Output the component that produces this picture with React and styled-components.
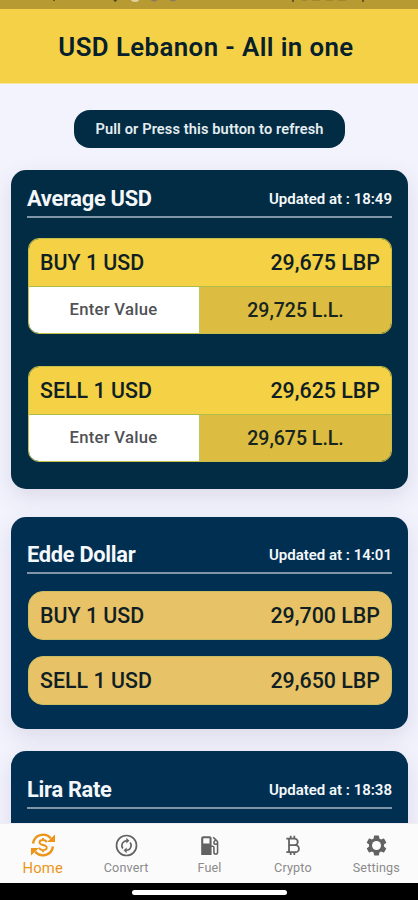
import React from "react";
import styled, { createGlobalStyle } from "styled-components";
import { MdLocalGasStation, MdSettings } from "react-icons/md";

const GlobalStyle = createGlobalStyle`
  * { box-sizing: border-box; }
  body { margin: 0; font-family: Roboto, "Liberation Sans", sans-serif; background: #f3f3fe; }
`;

const Screen = styled.div`
  width: 418px;
  height: 900px;
  overflow: hidden;
  display: flex;
  flex-direction: column;
  background: #f3f3fe;
`;

const StatusBar = styled.div`
  flex: none;
  height: 9px;
  background: #b89a33;
  overflow: hidden;

  svg { display: block; }
`;

const Header = styled.header`
  flex: none;
  height: 75px;
  display: flex;
  align-items: center;
  justify-content: center;
  padding: 2px 6px 0 0;
  background: #f4d147;
  border-bottom: 1px solid #f8e6a0;
`;

const Title = styled.h1`
  margin: 0;
  font-size: 25.8px;
  font-weight: 600;
  line-height: 30px;
  letter-spacing: 0.42px;
  color: #07202b;
`;

const Content = styled.main`
  flex: 1;
  min-height: 0;
  overflow: hidden;
  display: flex;
  flex-direction: column;
  padding: 26px 10px 0 11px;
`;

const RefreshButton = styled.button`
  flex: none;
  align-self: center;
  width: 271px;
  height: 38px;
  margin-bottom: 21.5px;
  padding: 0;
  border: 0;
  border-radius: 16px;
  background: #022c43;
  color: #e4edf1;
  font: 600 14.6px/18px Roboto, sans-serif;
  letter-spacing: 0.11px;
  white-space: nowrap;
`;

const Card = styled.section`
  flex: none;
  height: ${(p) => p.$height}px;
  margin-bottom: ${(p) => p.$gap || 0}px;
  padding: ${(p) => p.$top}px 16px 0;
  border-radius: 15px;
  background: ${(p) => p.$color};
  box-shadow: 0 8px 22px rgba(60, 55, 80, 0.13);
`;

const CardHead = styled.div`
  height: 36px;
  display: flex;
  align-items: center;
  justify-content: space-between;
  margin-bottom: ${(p) => p.$gap}px;
  border-bottom: 2px solid #7f95a8;
  color: #f4f8fa;
  white-space: nowrap;
`;

const CardTitle = styled.h2`
  margin: 0;
  font-size: 21.8px;
  font-weight: 700;
  line-height: 26px;
  letter-spacing: -0.27px;
`;

const Updated = styled.span`
  font-size: 15px;
  font-weight: 600;
  line-height: 18px;
  padding-bottom: 1px;
`;

const Converter = styled.div`
  height: 96px;
  margin: 0 0 32px 1px;
  overflow: hidden;
  border: 1px solid #c3bf4a;
  border-radius: 11px;
`;

const RateRow = styled.div`
  height: 47px;
  display: flex;
  align-items: center;
  justify-content: space-between;
  padding: 0 11px;
  background: #f4d145;
  color: #101f23;
  font-size: 21.4px;
  font-weight: 500;
  white-space: nowrap;
`;

const RatePill = styled(RateRow)`
  height: 49px;
  margin: 0 0 16px 1px;
  border: 1px solid #cdbd62;
  border-radius: 15px;
  background: #e8c267;
`;

const ValueRow = styled.div`
  height: 47px;
  display: grid;
  grid-template-columns: 171px 1fr;
  border-top: 1px solid #aebc48;
`;

const Cell = styled.div`
  display: flex;
  align-items: center;
  justify-content: center;
  white-space: nowrap;
`;

const EnterCell = styled(Cell)`
  padding: 0 1px 1px 0;
  background: #fff;
  border-right: 1px solid #b4cc68;
  color: #505254;
  font-size: 16.7px;
  font-weight: 500;
  letter-spacing: 0.25px;
`;

const ResultCell = styled(Cell)`
  background: #dcbd41;
  color: #17251f;
  font-size: 19.5px;
  font-weight: 500;
`;

const TabBar = styled.nav`
  flex: none;
  height: 60px;
  display: grid;
  grid-template-columns: repeat(5, 1fr);
  padding-left: 1px;
  background: #fbfbfc;
  border-top: 1px solid #eeeef2;
`;

const Tab = styled.div`
  display: flex;
  flex-direction: column;
  align-items: center;
  padding-top: ${(p) => (p.$active ? 8 : 9)}px;
  color: ${(p) => (p.$active ? "#eb9519" : "#626262")};

  svg { flex: none; }
`;

const TabLabel = styled.span`
  margin-top: 1px;
  font-size: ${(p) => (p.$active ? 14.8 : 12.6)}px;
  line-height: 18px;
  letter-spacing: ${(p) => (p.$active ? 0.2 : 0.15)}px;
  color: ${(p) => (p.$active ? "#eb9519" : "#8b8b8b")};
`;

const SystemBar = styled.div`
  flex: none;
  height: 17px;
  display: flex;
  justify-content: center;
  padding-top: 7px;
  background: #000;
`;

const Indicator = styled.div`
  width: 155px;
  height: 5px;
  border-radius: 2.5px;
  background: #fff;
`;

function StatusGlyphs() {
  return (
    <svg width="418" height="9" viewBox="0 0 418 9" aria-hidden="true">
      <path d="M54 0v1M114 0q2 2 2 0M293 0v2M363 0v2" stroke="#4f4118" strokeWidth="1.5" fill="none" />
      <path d="M302 0h5M312 0h8M326 0h7M338 0h8" stroke="#8c7529" strokeWidth="1" fill="none" />
      <circle cx="135" cy="-3.5" r="5.5" fill="#dfd19b" />
      <circle cx="154" cy="-3.5" r="5" fill="#8d7768" />
      <circle cx="173" cy="-3.5" r="5" fill="#8d7768" />
    </svg>
  );
}

function ExchangeIcon({ size }) {
  return (
    <svg width={size} height={size} viewBox="0 0 26 26" fill="none" stroke="currentColor">
      <path d="M3 11.5A10.2 10.2 0 0 1 20.8 6.2M23 14.5A10.2 10.2 0 0 1 5.2 19.8" strokeWidth="2.4" />
      <path d="M25 2.5v7.5h-8zM1 23.5V16h8z" fill="currentColor" stroke="none" />
      <path d="M16.6 10.2c-.4-1.5-1.8-2.2-3.6-2.2-2 0-3.5.9-3.5 2.4 0 3.5 7.3 1.7 7.3 5.2 0 1.6-1.6 2.5-3.7 2.5-2 0-3.5-.9-3.9-2.5M13 6v2M13 18v2.2" strokeWidth="1.8" />
    </svg>
  );
}

function ConvertIcon({ size }) {
  return (
    <svg width={size} height={size} viewBox="0 0 25 25" fill="none" stroke="currentColor">
      <circle cx="12.5" cy="12.5" r="10" strokeWidth="1.7" />
      <path d="M8.9 15.6A4.9 4.9 0 0 1 12.6 7.7M16.1 9.4a4.9 4.9 0 0 1-3.7 7.9" strokeWidth="1.6" />
      <path d="M12.3 4.8v5.8l3.1-2.9zM12.7 20.2v-5.8l-3.1 2.9z" fill="currentColor" stroke="none" />
    </svg>
  );
}

function BitcoinIcon({ size }) {
  return (
    <svg width={size} height={size} viewBox="0 0 25 25" fill="none" stroke="currentColor" strokeWidth="1.8">
      <path d="M6.3 5.7h8.2a3.1 3.1 0 0 1 0 6.5H9M14.5 12.2h1a3.4 3.4 0 0 1 0 6.9H6.3M9 5.7v13.4M10.7 2.8v3M14.3 2.8v3M10.7 19v3M14.3 19v3" />
    </svg>
  );
}

function GearIcon({ size }) {
  return (
    <svg width={size} height={size} viewBox="0 0 24 24">
      <MdSettings size={24} />
      <circle cx="12" cy="12" r="4.3" fill="#fbfbfc" />
    </svg>
  );
}

function RateConverter({ label, rate, result }) {
  return (
    <Converter>
      <RateRow><span>{label}</span><span>{rate}</span></RateRow>
      <ValueRow>
        <EnterCell>Enter Value</EnterCell>
        <ResultCell>{result}</ResultCell>
      </ValueRow>
    </Converter>
  );
}

function CardHeading({ title, time, gap }) {
  return (
    <CardHead $gap={gap}>
      <CardTitle>{title}</CardTitle>
      <Updated>Updated at : {time}</Updated>
    </CardHead>
  );
}

const tabs = [
  { label: "Home", Icon: ExchangeIcon, size: 26, active: true },
  { label: "Convert", Icon: ConvertIcon, size: 25 },
  { label: "Fuel", Icon: MdLocalGasStation, size: 25 },
  { label: "Crypto", Icon: BitcoinIcon, size: 25 },
  { label: "Settings", Icon: GearIcon, size: 25 },
];

export default function App() {
  return (
    <>
      <GlobalStyle />
      <Screen>
        <StatusBar><StatusGlyphs /></StatusBar>
        <Header><Title>USD Lebanon - All in one</Title></Header>
        <Content>
          <RefreshButton>Pull or Press this button to refresh</RefreshButton>
          <Card $height={319.5} $gap={27.5} $top={12.5} $color="#022c43">
            <CardHeading title="Average USD" time="18:49" gap={20} />
            <RateConverter label="BUY 1 USD" rate="29,675 LBP" result="29,725 L.L." />
            <RateConverter label="SELL 1 USD" rate="29,625 LBP" result="29,675 L.L." />
          </Card>
          <Card $height={212.5} $gap={22} $top={21.5} $color="#012f52">
            <CardHeading title="Edde Dollar" time="14:01" gap={17} />
            <RatePill><span>BUY 1 USD</span><span>29,700 LBP</span></RatePill>
            <RatePill><span>SELL 1 USD</span><span>29,650 LBP</span></RatePill>
          </Card>
          <Card $height={212} $top={22} $color="#012f52">
            <CardHeading title="Lira Rate" time="18:38" gap={17} />
          </Card>
        </Content>
        <TabBar>
          {tabs.map(({ label, Icon, size, active }) => (
            <Tab key={label} $active={active}>
              <Icon size={size} />
              <TabLabel $active={active}>{label}</TabLabel>
            </Tab>
          ))}
        </TabBar>
        <SystemBar><Indicator /></SystemBar>
      </Screen>
    </>
  );
}
